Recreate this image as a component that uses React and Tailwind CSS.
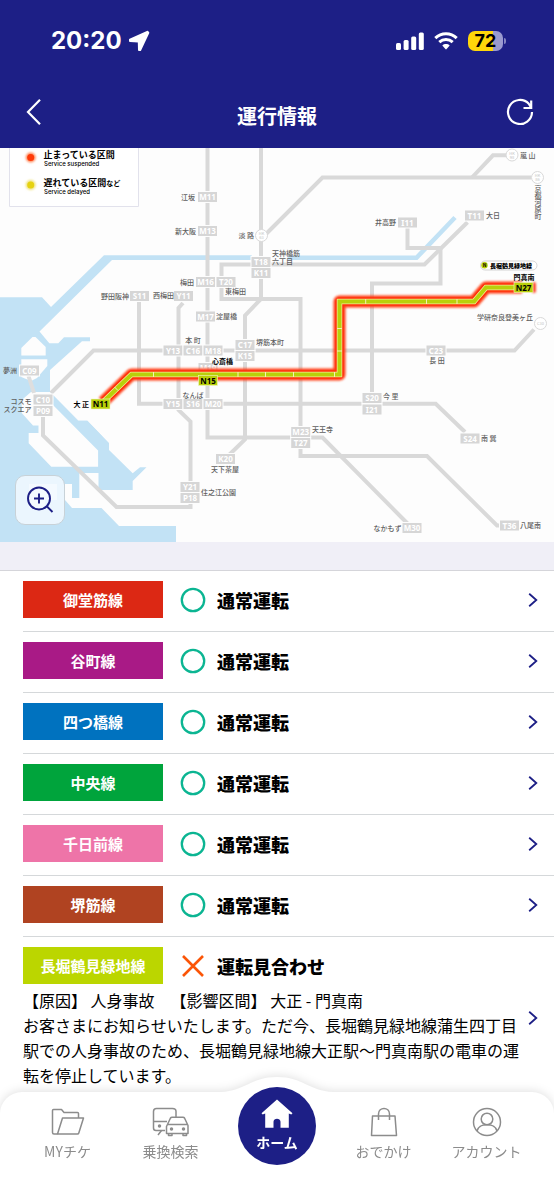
import React from "react";

const LINES = [
  { name: "御堂筋線", color: "bg-[#dc2814]" },
  { name: "谷町線", color: "bg-[#a91a86]" },
  { name: "四つ橋線", color: "bg-[#0072bf]" },
  { name: "中央線", color: "bg-[#00a43c]" },
  { name: "千日前線", color: "bg-[#ee74a8]" },
  { name: "堺筋線", color: "bg-[#b04321]" },
];

// Each entry: station code, centre x, centre y
const CODES = [
  ["M11", 207.5, 197], ["M13", 207.5, 231], ["M16", 205.5, 282], ["T20", 226, 282],
  ["S11", 139.5, 296], ["Y11", 183.5, 296], ["M17", 205.5, 316.5], ["T18", 261, 262],
  ["K11", 261, 273], ["C17", 245, 345], ["K15", 245, 356], ["Y13", 173, 350.5],
  ["C16", 193, 350.5], ["M18", 213, 350.5], ["M19", 208, 368], ["Y15", 173, 404],
  ["S16", 193, 404], ["M20", 213, 404], ["K20", 225.5, 459], ["Y21", 190, 487],
  ["P18", 190, 498], ["M23", 300.7, 432], ["T27", 300.7, 443], ["S20", 372, 398],
  ["I21", 372, 409.5], ["C23", 436, 350.5], ["S24", 470, 438.5], ["M30", 412, 528],
  ["T36", 509.5, 525.5], ["I11", 407.5, 222.5], ["T11", 474.5, 215.5],
  ["C09", 29.5, 370.5], ["C10", 43, 399.5], ["P09", 43, 411],
];

// Each entry: station name, x, centre y, text anchor
const NAMES = [
  ["江坂", 195, 197, "end"], ["新大阪", 196, 231, "end"], ["梅田", 194, 282, "end"],
  ["東梅田", 225, 291.5, "start"], ["野田阪神", 129, 296, "end"], ["西梅田", 174, 295.5, "end"],
  ["淀屋橋", 216, 316.5, "start"], ["天神橋筋", 272, 253.5, "start"], ["六丁目", 272, 261.5, "start"],
  ["堺筋本町", 256, 342.5, "start"], ["本 町", 193, 340, "middle"], ["なんば", 193, 395, "middle"],
  ["天下茶屋", 225, 469, "middle"], ["住之江公園", 201, 492.5, "start"], ["天王寺", 312, 429, "start"],
  ["今 里", 383, 396.5, "start"], ["長 田", 437, 360, "middle"], ["南 巽", 481, 438.5, "start"],
  ["なかもず", 401.5, 528.5, "end"], ["八尾南", 520, 525.5, "start"], ["井高野", 396, 222.5, "end"],
  ["大日", 486, 215.5, "start"], ["淡 路", 254, 235.5, "end"], ["嵐 山", 520, 155, "start"],
  ["学研奈良登美ヶ丘", 533, 317.5, "end"], ["夢洲", 17, 370.5, "end"],
  ["コスモ", 31.5, 401, "end"], ["スクエア", 31.5, 409, "end"],
];

const ROUTE = "M103 402 L131.5 374.5 H339.5 V301.5 H474 L486 287.5 H522";

function RouteMap() {
  return (
    <svg viewBox="0 148 554 394" className="block w-full font-['Noto_Sans_CJK_JP','Noto_Sans',sans-serif]" role="img" aria-label="路線図">
      <defs>
        <filter id="glow" filterUnits="userSpaceOnUse" x="60" y="240" width="494" height="200">
          <feGaussianBlur stdDeviation="1.3" />
        </filter>
        <filter id="dot" x="-60%" y="-60%" width="220%" height="220%">
          <feGaussianBlur stdDeviation="1.2" />
        </filter>
      </defs>
      <rect x="0" y="148" width="554" height="394" fill="#fdfdfd" />

      {/* sea and rivers */}
      <path
        fill="#c2e2f5"
        d="M0 297.3H42L51 307L104 255.3H251.7V260H112L39.5 331.5L49.3 343.3H58.3L64 337.3H90V341.3H82L50 370V392L78.3 420.7H87.3L109 443.3V450L132.7 473.3L140 467.3H146.5L132.7 481V490H98.5V473H79.3V498H72V484H65V500L72 508H101.5L119 526H176V542H0Z"
      />
      <path d="M288 257.8H416.5L455 217.5" fill="none" stroke="#c2e2f5" strokeWidth="4.5" />
      <g fill="#fdfdfd">
        <path d="M32.5 337L21.3 348V355.5H45.7V347L35.5 337Z" />
        <path d="M21.3 359.3H47.3V366L37 378L31 381L21.3 377Z" />
        <path d="M50 392L98.3 441V466.7H51.3L28.7 443.3V433H38.5V425.5H33L21.7 413V400L31 392Z" />
        <path d="M29 484H57V500H45V508H29Z" />
      </g>
      <path d="M52 394L78.3 420.7H87.3L109 443.3V470H98.3V450.7L52 404Z" fill="#c2e2f5" />

      {/* network in normal service */}
      <g fill="none" stroke="#d9d9d9" strokeWidth="4">
        <path d="M207.5 148V437.5H322.5L409 525" />
        <path d="M261 148V299L245 315.5V439.5L229 455" />
        <path d="M264 236L322.5 177.5H531" />
        <path d="M472 177.5L493 155.3H507" />
        <path d="M251 264.5H221.5V299H300.5V456H427L497 525.5H501" />
        <path d="M270 264.5H424.5L467.5 222.3" />
        <path d="M407.5 228V248H440.5V283.5H372V395" />
        <path d="M139 300V403.8H435.7L465 432" />
        <path d="M183 303L178.5 308V410L190.5 421.5V507H116.5L43 435.5V416" />
        <path d="M51 393L93.5 350.5H514.5L534 329.5" />
        <path d="M28.5 376L34 393" stroke="#dedede" />
      </g>
      <g fill="#fff" stroke="#d9d9d9" strokeWidth="1">
        <circle cx="261.5" cy="235.5" r="6" />
        <circle cx="512" cy="155" r="6" />
        <circle cx="537.5" cy="177.5" r="6" />
        <circle cx="540.5" cy="323.5" r="6" />
      </g>
      <g fill="#c4c4c4" fontSize="4" textAnchor="middle">
        <text x="261.5" y="235">HK</text><text x="261.5" y="239">63</text>
        <text x="512" y="154.500">HK</text><text x="512" y="158.500">98</text>
        <text x="537.5" y="177">HK</text><text x="537.5" y="181">86</text>
        <text x="540.5" y="325">C30</text>
      </g>

      {CODES.map(([code, x, y]) => (
        <g key={code}>
          <rect x={x - 10.5} y={y - 6} width="21" height="12" fill="#fdfdfd" />
          <rect x={x - 9.5} y={y - 5} width="19" height="10" fill="#d6d6d6" />
          <text x={x} y={y + 3} fontSize="8" fontWeight="700" fill="#fff" textAnchor="middle" className="font-['Noto_Sans',sans-serif]">
            {code}
          </text>
        </g>
      ))}

      <g fontSize="7" fontWeight="500" fill="#5f5f5f">
        {NAMES.map(([name, x, y, anchor]) => (
          <text key={name} x={x} y={y + 2.7} textAnchor={anchor}>{name}</text>
        ))}
        <text x="538" y="185" className="[writing-mode:vertical-rl]">京都河原町</text>
      </g>

      {/* Nagahori Tsurumi-ryokuchi line */}
      <path d={ROUTE} fill="none" stroke="#ff3c14" strokeWidth="12" strokeLinejoin="round" filter="url(#glow)" />
      <path d={ROUTE} fill="none" stroke="#ff3005" strokeWidth="8" strokeLinejoin="round" />
      <path d={ROUTE} fill="none" stroke="#f4e99a" strokeWidth="5.5" />
      <path d={ROUTE} fill="none" stroke="#b9d00a" strokeWidth="4" />
      <path
        d="M153.500 372V377M238 372V377M265.500 372V377M293.500 372V377M334.500 372V377M337 351H342M337 328.500H342M365.700 299V304M426.500 299V304M457 299V304M114.500 387L118 390.500"
        stroke="#f6f0b4"
        strokeWidth="1"
      />
      <rect x="532" y="282" width="4" height="11" rx="2" fill="#ff5030" filter="url(#dot)" />
      {[["N27", 523.5, 287.5], ["N15", 208, 380.5], ["N11", 100.5, 404]].map(([code, x, y]) => (
        <g key={code}>
          <rect x={x - 9.5} y={y - 5} width="19" height="10" fill="#b9d00a" stroke="#f4f6c8" strokeWidth="0.6" />
          <text x={x} y={y + 3} fontSize="8" fontWeight="700" fill="#000" textAnchor="middle" className="font-['Noto_Sans',sans-serif]">
            {code}
          </text>
        </g>
      ))}
      <rect x="480.500" y="261" width="56.500" height="9" rx="4.500" fill="#fff" stroke="#bbb" strokeWidth="0.6" />
      <circle cx="484.500" cy="265.300" r="3.200" fill="#b9d00a" />
      <text x="484.500" y="267" fontSize="5" fontWeight="700" textAnchor="middle">N</text>
      <g fontSize="7" fontWeight="700" fill="#000">
        <text x="511" y="267.500" fontSize="6" fontWeight="900" textAnchor="middle">長堀鶴見緑地線</text>
        <text x="524" y="280.300" textAnchor="middle">門真南</text>
        <text x="222.500" y="363.500" textAnchor="middle">心斎橋</text>
        <text x="89" y="406.700" textAnchor="end">大 正</text>
      </g>

      {/* legend */}
      <path d="M9.500 148V206.500H138.500V148" fill="#fff" stroke="#e2e2ec" strokeWidth="1" />
      <circle cx="30.700" cy="157.500" r="5" fill="#ff8a5c" filter="url(#dot)" />
      <circle cx="30.700" cy="157.500" r="3.500" fill="#ff3a08" />
      <circle cx="30.700" cy="185" r="5" fill="#efe37a" filter="url(#dot)" />
      <circle cx="30.700" cy="185" r="3.500" fill="#e6d210" />
      <g fill="#000" fontSize="9" fontWeight="700">
        <text x="43.500" y="157.500">止まっている区間</text>
        <text x="43.500" y="185.500">遅れている区間<tspan fontSize="7">など</tspan></text>
      </g>
      <g fill="#000" fontSize="6" fontWeight="500" className="font-[Inter,sans-serif]">
        <text x="44" y="166">Service suspended</text>
        <text x="44" y="194">Service delayed</text>
      </g>
    </svg>
  );
}

function StatusBar() {
  return (
    <div className="flex items-center justify-between pt-6 pr-12 pl-[51px] text-white">
      <div className="flex items-center gap-1.5">
        <time className="font-[Inter,sans-serif] text-2xl leading-[34px] font-bold">20:20</time>
        <svg width="22" height="22" viewBox="0 0 22 22" aria-hidden="true">
          <path
            d="M19.3 1.8L2 9.6L2 11L10.2 11.4L10.8 12L11 20L12.200 20L20.300 2.800Z"
            fill="#fff"
            stroke="#fff"
            strokeWidth="2"
            strokeLinejoin="round"
          />
        </svg>
      </div>
      <div className="flex items-center">
        <svg width="28" height="18" viewBox="0 0 28 18" fill="#fff" aria-hidden="true">
          <rect x="0" y="11" width="5" height="7" rx="1.500" />
          <rect x="7.600" y="8" width="5" height="10" rx="1.500" />
          <rect x="15.200" y="4.500" width="5" height="13.500" rx="1.500" />
          <rect x="22.800" y="0.500" width="5" height="17.500" rx="1.500" />
        </svg>
        <svg className="ml-2.5" width="24" height="18" viewBox="0 0 24 18" aria-hidden="true">
          <g fill="none" stroke="#fff" strokeWidth="3">
            <path d="M1.300 6.200C7.300.4 16.700.4 22.700 6.200" />
            <path d="M5.300 10.200C9.100 6.700 14.900 6.700 18.700 10.200" />
          </g>
          <path d="M8.300 13.400C10.400 11.600 13.600 11.600 15.700 13.400L12.600 17.100Q12 17.700 11.400 17.100Z" fill="#fff" />
        </svg>
        <div className="ml-2.5 flex h-5 w-[35px] items-center justify-center rounded-[7px] bg-linear-to-r from-[#ffd60a] from-72% to-[#9a9ad0] to-72% font-[Inter,sans-serif] text-lg leading-5 font-bold text-black">
          72
        </div>
        <div className="ml-px h-1.5 w-0.5 rounded-r-sm bg-[#8585c2]" />
      </div>
    </div>
  );
}

function Chevron() {
  return (
    <svg width="10" height="14" viewBox="0 0 10 14" fill="none" stroke="#1d1f86" strokeWidth="1.800" aria-hidden="true">
      <path d="M1.200.8L8.300 7L1.200 13.200" />
    </svg>
  );
}

function LineBadge({ name, color }) {
  return (
    <span className={"flex h-[37px] w-[140px] shrink-0 items-center justify-center text-[15px] leading-5 font-bold text-white " + color}>
      {name}
    </span>
  );
}

const iconProps = { fill: "none", stroke: "#8c8c8c", strokeWidth: 1.5, strokeLinejoin: "round", "aria-hidden": true };

function NavItem({ label, children }) {
  return (
    <a href="#" className="flex w-[103px] shrink flex-col items-center pt-[14px] text-sm leading-5 text-[#8c8c8c]">
      <span className="flex h-8 items-center">{children}</span>
      <span className="mt-[3px]">{label}</span>
    </a>
  );
}

function BottomNav() {
  return (
    <nav className="fixed inset-x-0 bottom-0 drop-shadow-[0_-1px_5px_rgba(0,0,0,0.12)]">
      <svg className="absolute -top-[15px] left-1/2 -translate-x-1/2" width="112" height="17" viewBox="0 0 112 17" aria-hidden="true">
        <path d="M0 15C24 14 30 0 56 0C82 0 88 14 112 15V17H0Z" fill="#fff" />
      </svg>
      <div className="relative flex h-[108px] justify-center rounded-t-[22px] bg-white px-4">
        <NavItem label="MYチケ">
          <svg width="34" height="28" viewBox="0 0 34 28" {...iconProps}>
            <path d="M6.500 26H3Q1.500 26 1.500 24.500V2.500Q1.500 1.500 2.500 1.500H10.500L13 4.500H26.500Q27.500 4.500 27.500 5.500V10" />
            <path d="M11.500 10H32.500L27.800 25Q27.500 26 26.500 26H6.500Z" />
          </svg>
        </NavItem>
        <NavItem label="乗換検索">
          <svg width="38" height="30" viewBox="0 0 38 30" {...iconProps}>
            <path d="M13 23.500H4Q1.500 23.500 1.500 21V4.500Q1.500 1.500 4.500 1.500H20.500Q24 1.500 24 4.500V10" />
            <path d="M1.500 14.500H15M9.500 23.500L6 28" />
            <circle cx="7.500" cy="19" r="1" fill="#8c8c8c" />
            <path d="M14.500 19.500L18.500 11Q19 10.300 20 10.300H31Q32 10.300 32.500 11L36 18.500V26.500H14.500ZM15.500 17.500H35.500M16.500 26.500V28.500H20V26.500M31 26.500V28.500H34.500V26.500" />
            <circle cx="19.500" cy="22" r="1" fill="#8c8c8c" />
            <circle cx="31.500" cy="22" r="1" fill="#8c8c8c" />
          </svg>
        </NavItem>
        <a href="#" aria-current="page" className="mx-4 -mt-[5px] flex size-[78px] shrink-0 flex-col items-center rounded-full bg-[#1d1f86] pt-3 text-sm leading-5 font-bold text-white">
          <svg width="34" height="30" viewBox="0 0 34 30" fill="#fff" aria-hidden="true">
            <path d="M17 .5L32.500 14.300L31.300 15.500L28.800 14.500V28.800H20.500V22.800C20.500 18.800 13.500 18.800 13.500 22.800V28.800H5.200V14.500L2.700 15.500L1.500 14.300Z" />
          </svg>
          <span className="mt-[3px]">ホーム</span>
        </a>
        <NavItem label="おでかけ">
          <svg width="28" height="30" viewBox="0 0 28 30" {...iconProps}>
            <path d="M2.500 9H25L26.500 28.500H1.500Z" />
            <path d="M8.500 13V7C8.500 -.3 19.500 -.3 19.500 7V13" />
          </svg>
        </NavItem>
        <NavItem label="アカウント">
          <svg width="30" height="30" viewBox="0 0 30 30" {...iconProps}>
            <circle cx="15" cy="15" r="13.500" />
            <circle cx="15" cy="12" r="5.800" />
            <path d="M5 24C7 17.500 12 17.800 15 17.800C18 17.800 23 17.500 25 24" />
          </svg>
        </NavItem>
      </div>
    </nav>
  );
}

export default function App() {
  return (
    <div className="min-h-screen bg-white pb-28 font-['Noto_Sans_CJK_JP','Noto_Sans',sans-serif] text-black" lang="ja">
      <header className="bg-[#1d1f86] pb-[18px] text-white">
        <StatusBar />
        <div className="mt-9 flex items-center justify-between px-[18px]">
          <button type="button" aria-label="戻る" className="flex h-9 w-8 items-center justify-center">
            <svg width="16" height="26" viewBox="0 0 16 26" fill="none" stroke="#fff" strokeWidth="2.200" aria-hidden="true">
              <path d="M14 .8L2 13L14 25.200" />
            </svg>
          </button>
          <h1 className="pt-2 text-xl leading-7 font-bold">運行情報</h1>
          <button type="button" aria-label="更新" className="flex h-9 w-8 items-center justify-center">
            <svg width="28" height="28" viewBox="0 0 28 28" fill="none" stroke="#fff" strokeWidth="2.200" aria-hidden="true">
              <path d="M26 14A12 12 0 1 1 22.800 5.800L25 9.500M25.200 2.500V10H17.500" />
            </svg>
          </button>
        </div>
      </header>

      <main>
        <section className="relative">
          <RouteMap />
          <button
            type="button"
            aria-label="拡大"
            className="absolute bottom-[17px] left-[15px] flex size-[50px] items-center justify-center rounded-[10px] border border-[#c8d2d8] bg-[#f2f9ff]/85"
          >
            <svg width="28" height="28" viewBox="0 0 28 28" fill="none" stroke="#1d1f86" strokeWidth="1.900" aria-hidden="true">
              <circle cx="13" cy="12.500" r="11" />
              <path d="M13 7.500V17.500M8 12.500H18M20.500 20L26.500 26" />
            </svg>
          </button>
        </section>

        <div className="h-7 bg-[#f0eff7]" />

        <ul className="border-t border-[#d5d5da]">
          {LINES.map((line) => (
            <li key={line.name} className="pl-[23px]">
              <a href="#" className="flex items-center border-b border-[#d5d8da] pt-[10px] pr-4 pb-[13px]">
                <LineBadge name={line.name} color={line.color} />
                <svg className="ml-[17px] shrink-0" width="26" height="26" viewBox="0 0 26 26" aria-hidden="true">
                  <circle cx="13" cy="13" r="11.200" fill="none" stroke="#0bb592" strokeWidth="2.300" />
                </svg>
                <span className="ml-[11px] flex-1 text-lg leading-6 font-black">通常運転</span>
                <Chevron />
              </a>
            </li>
          ))}
          <li className="pl-[23px]">
            <a href="#" className="flex items-center pt-[10px] pr-4 pb-[13px]">
              <div className="flex-1">
                <div className="flex items-center">
                  <LineBadge name="長堀鶴見緑地線" color="bg-[#bbd600]" />
                  <svg className="ml-[17px] shrink-0" width="26" height="26" viewBox="0 0 26 26" fill="none" stroke="#fb5507" strokeWidth="2.600" aria-hidden="true">
                    <path d="M3 3L23 23M23 3L3 23" />
                  </svg>
                  <span className="ml-[11px] text-lg leading-6 font-black">運転見合わせ</span>
                </div>
                <p className="mt-1 mr-1 text-base leading-[25px] [text-spacing-trim:space-all]">
                  【原因】 人身事故　【影響区間】 大正 - 門真南
                  <br />
                  お客さまにお知らせいたします。ただ今、長堀鶴見緑地線蒲生四丁目駅での人身事故のため、長堀鶴見緑地線大正駅〜門真南駅の電車の運転を停止しています。
                </p>
              </div>
              <Chevron />
            </a>
          </li>
        </ul>
      </main>

      <BottomNav />
    </div>
  );
}
